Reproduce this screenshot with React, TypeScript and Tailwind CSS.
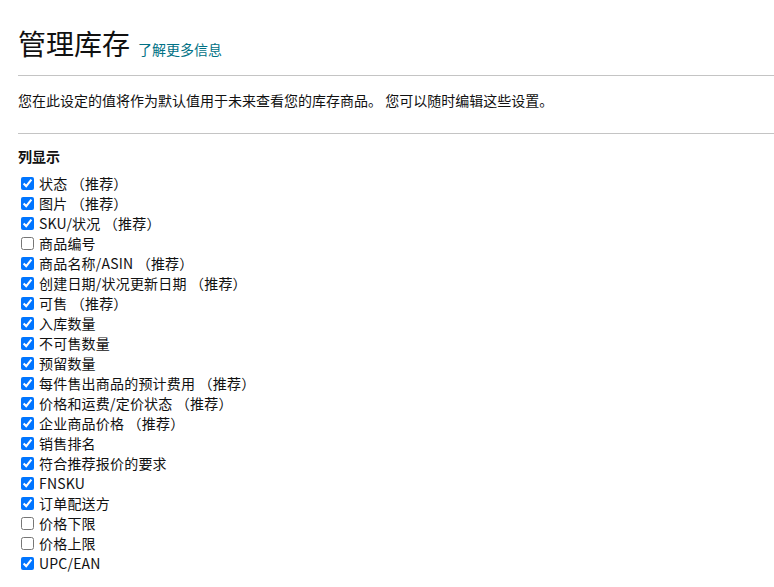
import React from "react";

const items: [string, boolean][] = [
  ["状态 （推荐）", true],
  ["图片 （推荐）", true],
  ["SKU/状况 （推荐）", true],
  ["商品编号", false],
  ["商品名称/ASIN （推荐）", true],
  ["创建日期/状况更新日期 （推荐）", true],
  ["可售 （推荐）", true],
  ["入库数量", true],
  ["不可售数量", true],
  ["预留数量", true],
  ["每件售出商品的预计费用 （推荐）", true],
  ["价格和运费/定价状态 （推荐）", true],
  ["企业商品价格 （推荐）", true],
  ["销售排名", true],
  ["符合推荐报价的要求", true],
  ["FNSKU", true],
  ["订单配送方", true],
  ["价格下限", false],
  ["价格上限", false],
  ["UPC/EAN", true],
];

export default function App() {
  return (
    <div
      className="bg-white text-[#111] min-h-[587px] pl-[18px] pt-[23px]"
      style={{ fontFamily: '"Noto Sans CJK SC", "Noto Sans", sans-serif' }}
    >
      <div className="flex items-baseline gap-[8px]">
        <h1 className="text-[28px] leading-[40px] font-normal text-[#111]">管理库存</h1>
        <a className="text-[14px] text-[#007185]">了解更多信息</a>
      </div>
      <div className="mt-[12px] border-t border-[#c4c4c4]" />
      <p className="text-[14px] leading-[20px] mt-[14px]">
        您在此设定的值将作为默认值用于未来查看您的库存商品。 您可以随时编辑这些设置。
      </p>
      <div className="mt-[23px] border-t border-[#c4c4c4]" />
      <div className="mt-[12px] text-[14px] leading-[20px] font-bold">列显示</div>
      <div className="mt-[7px] flex flex-col">
        {items.map(([label, checked], i) => (
          <label key={i} className="flex items-center h-[20px] text-[14px]">
            <input
              type="checkbox"
              defaultChecked={checked}
              className="w-[13px] h-[13px] m-0 ml-[3px] mr-[5px] accent-[#0075ff]"
            />
            <span className="tracking-[0.2px]">{label}</span>
          </label>
        ))}
      </div>
    </div>
  );
}
